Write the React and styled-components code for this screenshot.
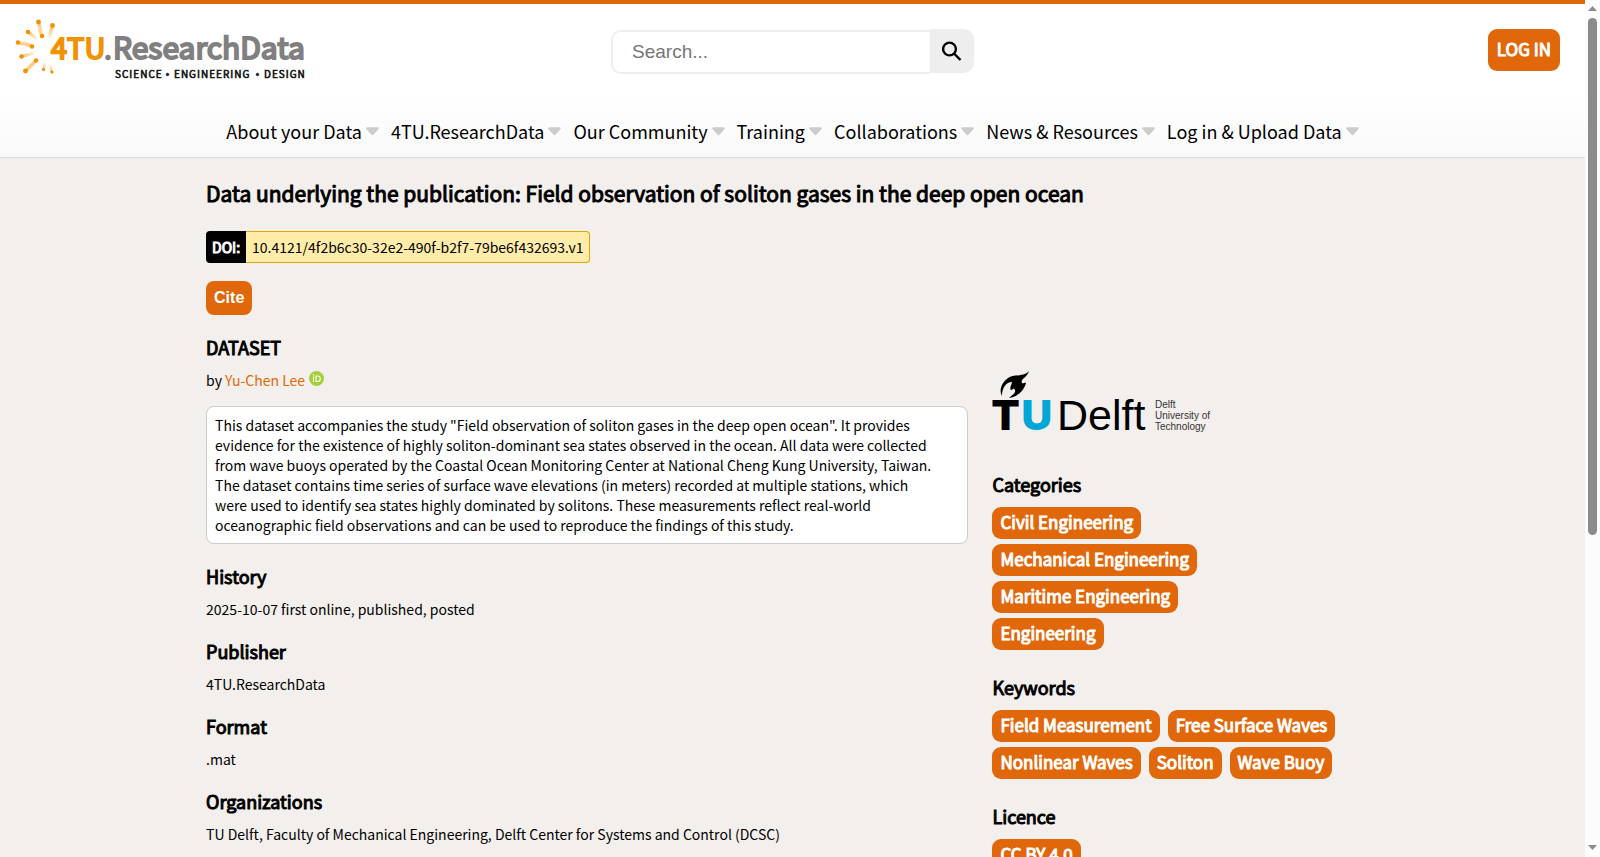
import React from "react";
import styled, { createGlobalStyle } from "styled-components";

const ORANGE = "#e0680b";
const SANS = `"Noto Sans CJK SC", "Open Sans", sans-serif`;
const ARIAL = `"Liberation Sans", Arial, sans-serif`;

const GlobalStyle = createGlobalStyle`
  * { box-sizing: border-box; }
  body {
    margin: 0;
    background: #f3efec;
    color: #000;
    font: 14px/20px ${SANS};
  }
  a { text-decoration: none; }
`;

const Shell = styled.div`
  display: flex;
  height: 100vh;
`;

const Page = styled.div`
  flex: 1;
  min-width: 0;
  overflow-y: auto;
  scrollbar-width: none;
`;

const ScrollBar = styled.div`
  display: flex;
  flex-direction: column;
  align-items: center;
  flex: none;
  width: 15px;
  background: #fcfcfc;
`;

const ScrollArrow = styled.svg`
  flex: none;
  width: 9px;
  height: 18px;
  fill: #8b8b8b;
`;

const ScrollTrack = styled.div`
  flex: 1;
  width: 9px;
`;

const ScrollThumb = styled.div`
  height: 63%;
  border-radius: 5px;
  background: #8b8b8b;
`;

const Header = styled.header`
  border-top: 4px solid ${ORANGE};
  border-bottom: 1px solid #ddd;
  background: linear-gradient(#fff 60%, #f9f9f9);
`;

const TopBar = styled.div`
  display: grid;
  grid-template-columns: 1fr auto 1fr;
  align-items: start;
  height: 102px;
  padding: 12px 25px 0 15px;
`;

const HomeLink = styled.a`
  display: block;
  justify-self: start;
`;

const SearchForm = styled.form`
  display: flex;
  align-items: flex-start;
  padding: 13px 0 0 10px;
`;

const SearchInput = styled.input`
  width: 319px;
  height: 44px;
  margin-top: 1px;
  padding: 0 19px;
  border: 2px solid #eee;
  border-right: 0;
  border-radius: 10px 0 0 10px;
  background: #fff;
  font: 19px ${ARIAL};
  outline: 0;
  &::placeholder { color: #757575; opacity: 1; }
`;

const SearchButton = styled.button`
  display: flex;
  align-items: center;
  justify-content: center;
  width: 44px;
  height: 44px;
  padding: 0;
  border: 0;
  border-radius: 0 10px 10px 0;
  background: #eee;
`;

const LoginButton = styled.a`
  justify-self: end;
  margin-top: 13px;
  padding: 0 9px 2px;
  border-radius: 9px;
  background: ${ORANGE};
  color: #fff;
  font-size: 17px;
  line-height: 40px;
  -webkit-text-stroke: 1px #fff;
`;

const Nav = styled.nav`
  display: flex;
  justify-content: center;
  gap: 12px;
  height: 51px;
  padding-top: 10px;
`;

const NavItem = styled.a`
  display: flex;
  align-items: center;
  gap: 4px;
  height: 30px;
  color: #000;
  font-size: 18px;
`;

const Main = styled.main`
  margin: 0 13%;
  padding: 19px 0 520px;
`;

const Title = styled.h1`
  margin: 0 0 22px;
  font-size: 21px;
  line-height: 32px;
  font-weight: 400;
  -webkit-text-stroke: 1px #000;
`;

const Doi = styled.div`
  display: flex;
  width: max-content;
  margin-bottom: 18px;
  line-height: 30px;
`;

const DoiLabel = styled.span`
  padding: 1px 6px;
  border-radius: 4px 0 0 4px;
  background: #000;
  color: #fff;
  -webkit-text-stroke: 1px #fff;
`;

const DoiLink = styled.a`
  padding: 0 6px;
  border: 1px solid #d9a900;
  border-left: 0;
  border-radius: 0 4px 4px 0;
  background: #ffeca9;
  color: #000;
`;

const CiteButton = styled.button`
  display: block;
  height: 34px;
  padding: 0 8px;
  border: 0;
  border-radius: 8px;
  background: ${ORANGE};
  color: #fff;
  font: bold 16px ${ARIAL};
`;

const Heading = styled.h2`
  margin: 0 0 10px;
  padding-top: ${(p) => p.$gap}px;
  font-size: 18px;
  line-height: 26px;
  font-weight: 400;
  -webkit-text-stroke: 1px #000;
`;

const Columns = styled.div`
  display: grid;
  grid-template-columns: 65% 1fr;
  column-gap: 24px;
`;

const Text = styled.p`
  margin: 0;
`;

const AuthorLink = styled.a`
  color: ${ORANGE};
`;

const Orcid = styled.svg`
  margin-left: 4px;
`;

const Description = styled.div`
  margin-top: 16px;
  padding: 8px 32px 8px 8px;
  border: 1px solid #ccc;
  border-radius: 8px;
  background: #fff;
`;

const InstitutionLink = styled.a`
  display: block;
  height: 77px;
`;

const TagList = styled.ul`
  display: flex;
  flex-direction: ${(p) => (p.$stacked ? "column" : "row")};
  flex-wrap: ${(p) => (p.$stacked ? "nowrap" : "wrap")};
  align-items: flex-start;
  gap: 5px 8px;
  max-width: 360px;
  margin: 0;
  padding: 0;
  list-style: none;
`;

const Tag = styled.a`
  display: block;
  padding: 0 8px 2px;
  border-radius: 9px;
  background: ${ORANGE};
  color: #fff;
  font-size: 17px;
  line-height: 30px;
  -webkit-text-stroke: 1px #fff;
`;

const navItems = ["About your Data", "4TU.ResearchData", "Our Community", "Training", "Collaborations", "News & Resources", "Log in & Upload Data"];

const sections = [
  ["History", "2025-10-07 first online, published, posted"],
  ["Publisher", "4TU.ResearchData"],
  ["Format", ".mat"],
  ["Organizations", "TU Delft, Faculty of Mechanical Engineering, Delft Center for Systems and Control (DCSC)"],
];

const tagGroups = [
  { title: "Categories", stacked: true, tags: ["Civil Engineering", "Mechanical Engineering", "Maritime Engineering", "Engineering"] },
  { title: "Keywords", tags: ["Field Measurement", "Free Surface Waves", "Nonlinear Waves", "Soliton", "Wave Buoy"] },
  { title: "Licence", tags: ["CC BY 4.0"] },
];

// Each ray: the dot's centre and radius, then where its fading tail ends.
const rays = [
  [23.5, 6, 2.4, 26, 16],
  [37.5, 9.5, 2.4, 34, 22],
  [13, 16, 2.3, 22, 23],
  [27, 20, 2.3, 24, 12],
  [3, 26.5, 2.2, 15, 30],
  [17, 30.5, 2.2, 8, 26],
  [6.5, 40.5, 2.2, 19, 37],
  [21, 44.5, 2.2, 14, 51],
  [10.5, 55, 2.4, 20, 46],
  [28.5, 53.5, 1.6, 30, 47],
  [37, 56, 1.6, 35, 49],
];

function SiteLogo() {
  return (
    <svg width="296" height="66" viewBox="0 0 296 66" role="img" aria-label="4TU.ResearchData">
      {rays.map(([x, y, r, tx, ty], i) => (
        <g key={i}>
          <linearGradient id={`ray${i}`} gradientUnits="userSpaceOnUse" x1={x} y1={y} x2={tx} y2={ty}>
            <stop offset="0" stopColor="#f39200" stopOpacity=".6" />
            <stop offset="1" stopColor="#f39200" stopOpacity=".1" />
          </linearGradient>
          <line x1={x} y1={y} x2={tx} y2={ty} stroke={`url(#ray${i})`} strokeWidth={r * 1.5} />
          <circle cx={x} cy={y} r={r} fill="#f39200" />
        </g>
      ))}
      <g fontFamily={SANS} strokeWidth="2">
        <text x="36" y="43" fontSize="29" fill="#f39200" stroke="#f39200">4TU</text>
        <text x="98" y="43" fontSize="30" fill="#808080" stroke="#808080">ResearchData</text>
      </g>
      <circle cx="93" cy="41.5" r="2.7" fill="#808080" />
      <g fontFamily={SANS} fontSize="10" letterSpacing="1" fill="#111" stroke="#111" strokeWidth=".6">
        <text x="100" y="62">SCIENCE</text>
        <text x="159" y="62">ENGINEERING</text>
        <text x="249" y="62">DESIGN</text>
        <circle cx="152.5" cy="58.5" r="1.3" />
        <circle cx="242.5" cy="58.5" r="1.3" />
      </g>
    </svg>
  );
}

function DelftLogo() {
  return (
    <svg width="228" height="77" viewBox="0 0 228 77" role="img" aria-label="TU Delft">
      <path
        fill="#000"
        d="M37 1C35 8 28 9 30 13C32 14 32 12 34 13C32 20 27 26 17 28C20 25 24 23 23 20C22 17 20 20 19 20C17 18 20 14 20 12C14 12 10 18 10 26C7 21 9 13 16 8C22 4 32 7 37 1Z"
      />
      <g fontFamily={ARIAL}>
        <text x="1" y="59" fontSize="41" fontWeight="700" stroke="#000" strokeWidth="2">T</text>
        <text x="30" y="59" fontSize="41" fontWeight="700" fill="#00a6d6" stroke="#00a6d6" strokeWidth="2">U</text>
        <text x="65" y="60" fontSize="43">Delft</text>
        <g fontSize="10" fill="#333">
          <text x="163" y="38">Delft</text>
          <text x="163" y="49">University of</text>
          <text x="163" y="60">Technology</text>
        </g>
      </g>
    </svg>
  );
}

export default function App() {
  return (
    <Shell>
      <GlobalStyle />
      <Page>
        <Header>
          <TopBar>
            <HomeLink href="#"><SiteLogo /></HomeLink>
            <SearchForm role="search">
              <SearchInput type="text" placeholder="Search..." aria-label="Search" />
              <SearchButton type="button" aria-label="Search">
                <svg width="20" height="20" viewBox="0 0 20 20" fill="none" stroke="#000" strokeWidth="2.4">
                  <circle cx="7.5" cy="8" r="6.4" />
                  <path d="M12 12.5l6.5 6.5" />
                </svg>
              </SearchButton>
            </SearchForm>
            <LoginButton href="#">LOG IN</LoginButton>
          </TopBar>
          <Nav>
            {navItems.map((label) => (
              <NavItem href="#" key={label}>
                {label}
                <svg width="13" height="9" viewBox="0 0 13 9" aria-hidden="true">
                  <path d="M1.5 1.5h10l-5 5.5z" fill="#ccc" stroke="#ccc" strokeWidth="2.5" strokeLinejoin="round" />
                </svg>
              </NavItem>
            ))}
          </Nav>
        </Header>
        <Main>
          <Title>Data underlying the publication: Field observation of soliton gases in the deep open ocean</Title>
          <Doi>
            <DoiLabel>DOI:</DoiLabel>
            <DoiLink href="#">10.4121/4f2b6c30-32e2-490f-b2f7-79be6f432693.v1</DoiLink>
          </Doi>
          <CiteButton type="button">Cite</CiteButton>
          <Heading $gap={19}>DATASET</Heading>
          <Columns>
            <div>
              <Text>
                by <AuthorLink href="#">Yu-Chen Lee</AuthorLink>
                <Orcid width="15" height="15" viewBox="0 0 15 15" role="img" aria-label="ORCID">
                  <circle cx="7.5" cy="7.5" r="7.5" fill="#a6ce39" />
                  <path d="M4.5 5.5v5.5M7 5v5.5h1.5a2.7 2.7 0 0 0 0-5.5z" fill="none" stroke="#fff" strokeWidth="1.1" />
                  <circle cx="4.5" cy="3.8" r=".8" fill="#fff" />
                </Orcid>
              </Text>
              <Description>
                This dataset accompanies the study "Field observation of soliton gases in the deep open ocean". It provides
                evidence for the existence of highly soliton-dominant sea states observed in the ocean. All data were
                collected from wave buoys operated by the Coastal Ocean Monitoring Center at National Cheng Kung University,
                Taiwan. The dataset contains time series of surface wave elevations (in meters) recorded at multiple
                stations, which were used to identify sea states highly dominated by solitons. These measurements reflect
                real-world oceanographic field observations and can be used to reproduce the findings of this study.
              </Description>
              {sections.map(([title, body]) => (
                <section key={title}>
                  <Heading $gap={19}>{title}</Heading>
                  <Text>{body}</Text>
                </section>
              ))}
            </div>
            <aside>
              <InstitutionLink href="#"><DelftLogo /></InstitutionLink>
              {tagGroups.map((group) => (
                <section key={group.title}>
                  <Heading $gap={24}>{group.title}</Heading>
                  <TagList $stacked={group.stacked}>
                    {group.tags.map((tag) => (
                      <li key={tag}><Tag href="#">{tag}</Tag></li>
                    ))}
                  </TagList>
                </section>
              ))}
            </aside>
          </Columns>
        </Main>
      </Page>
      <ScrollBar aria-hidden="true">
        <ScrollArrow viewBox="0 0 9 18"><path d="M4.5 6L9 11H0z" /></ScrollArrow>
        <ScrollTrack><ScrollThumb /></ScrollTrack>
        <ScrollArrow viewBox="0 0 9 18"><path d="M0 6h9l-4.5 5z" /></ScrollArrow>
      </ScrollBar>
    </Shell>
  );
}
